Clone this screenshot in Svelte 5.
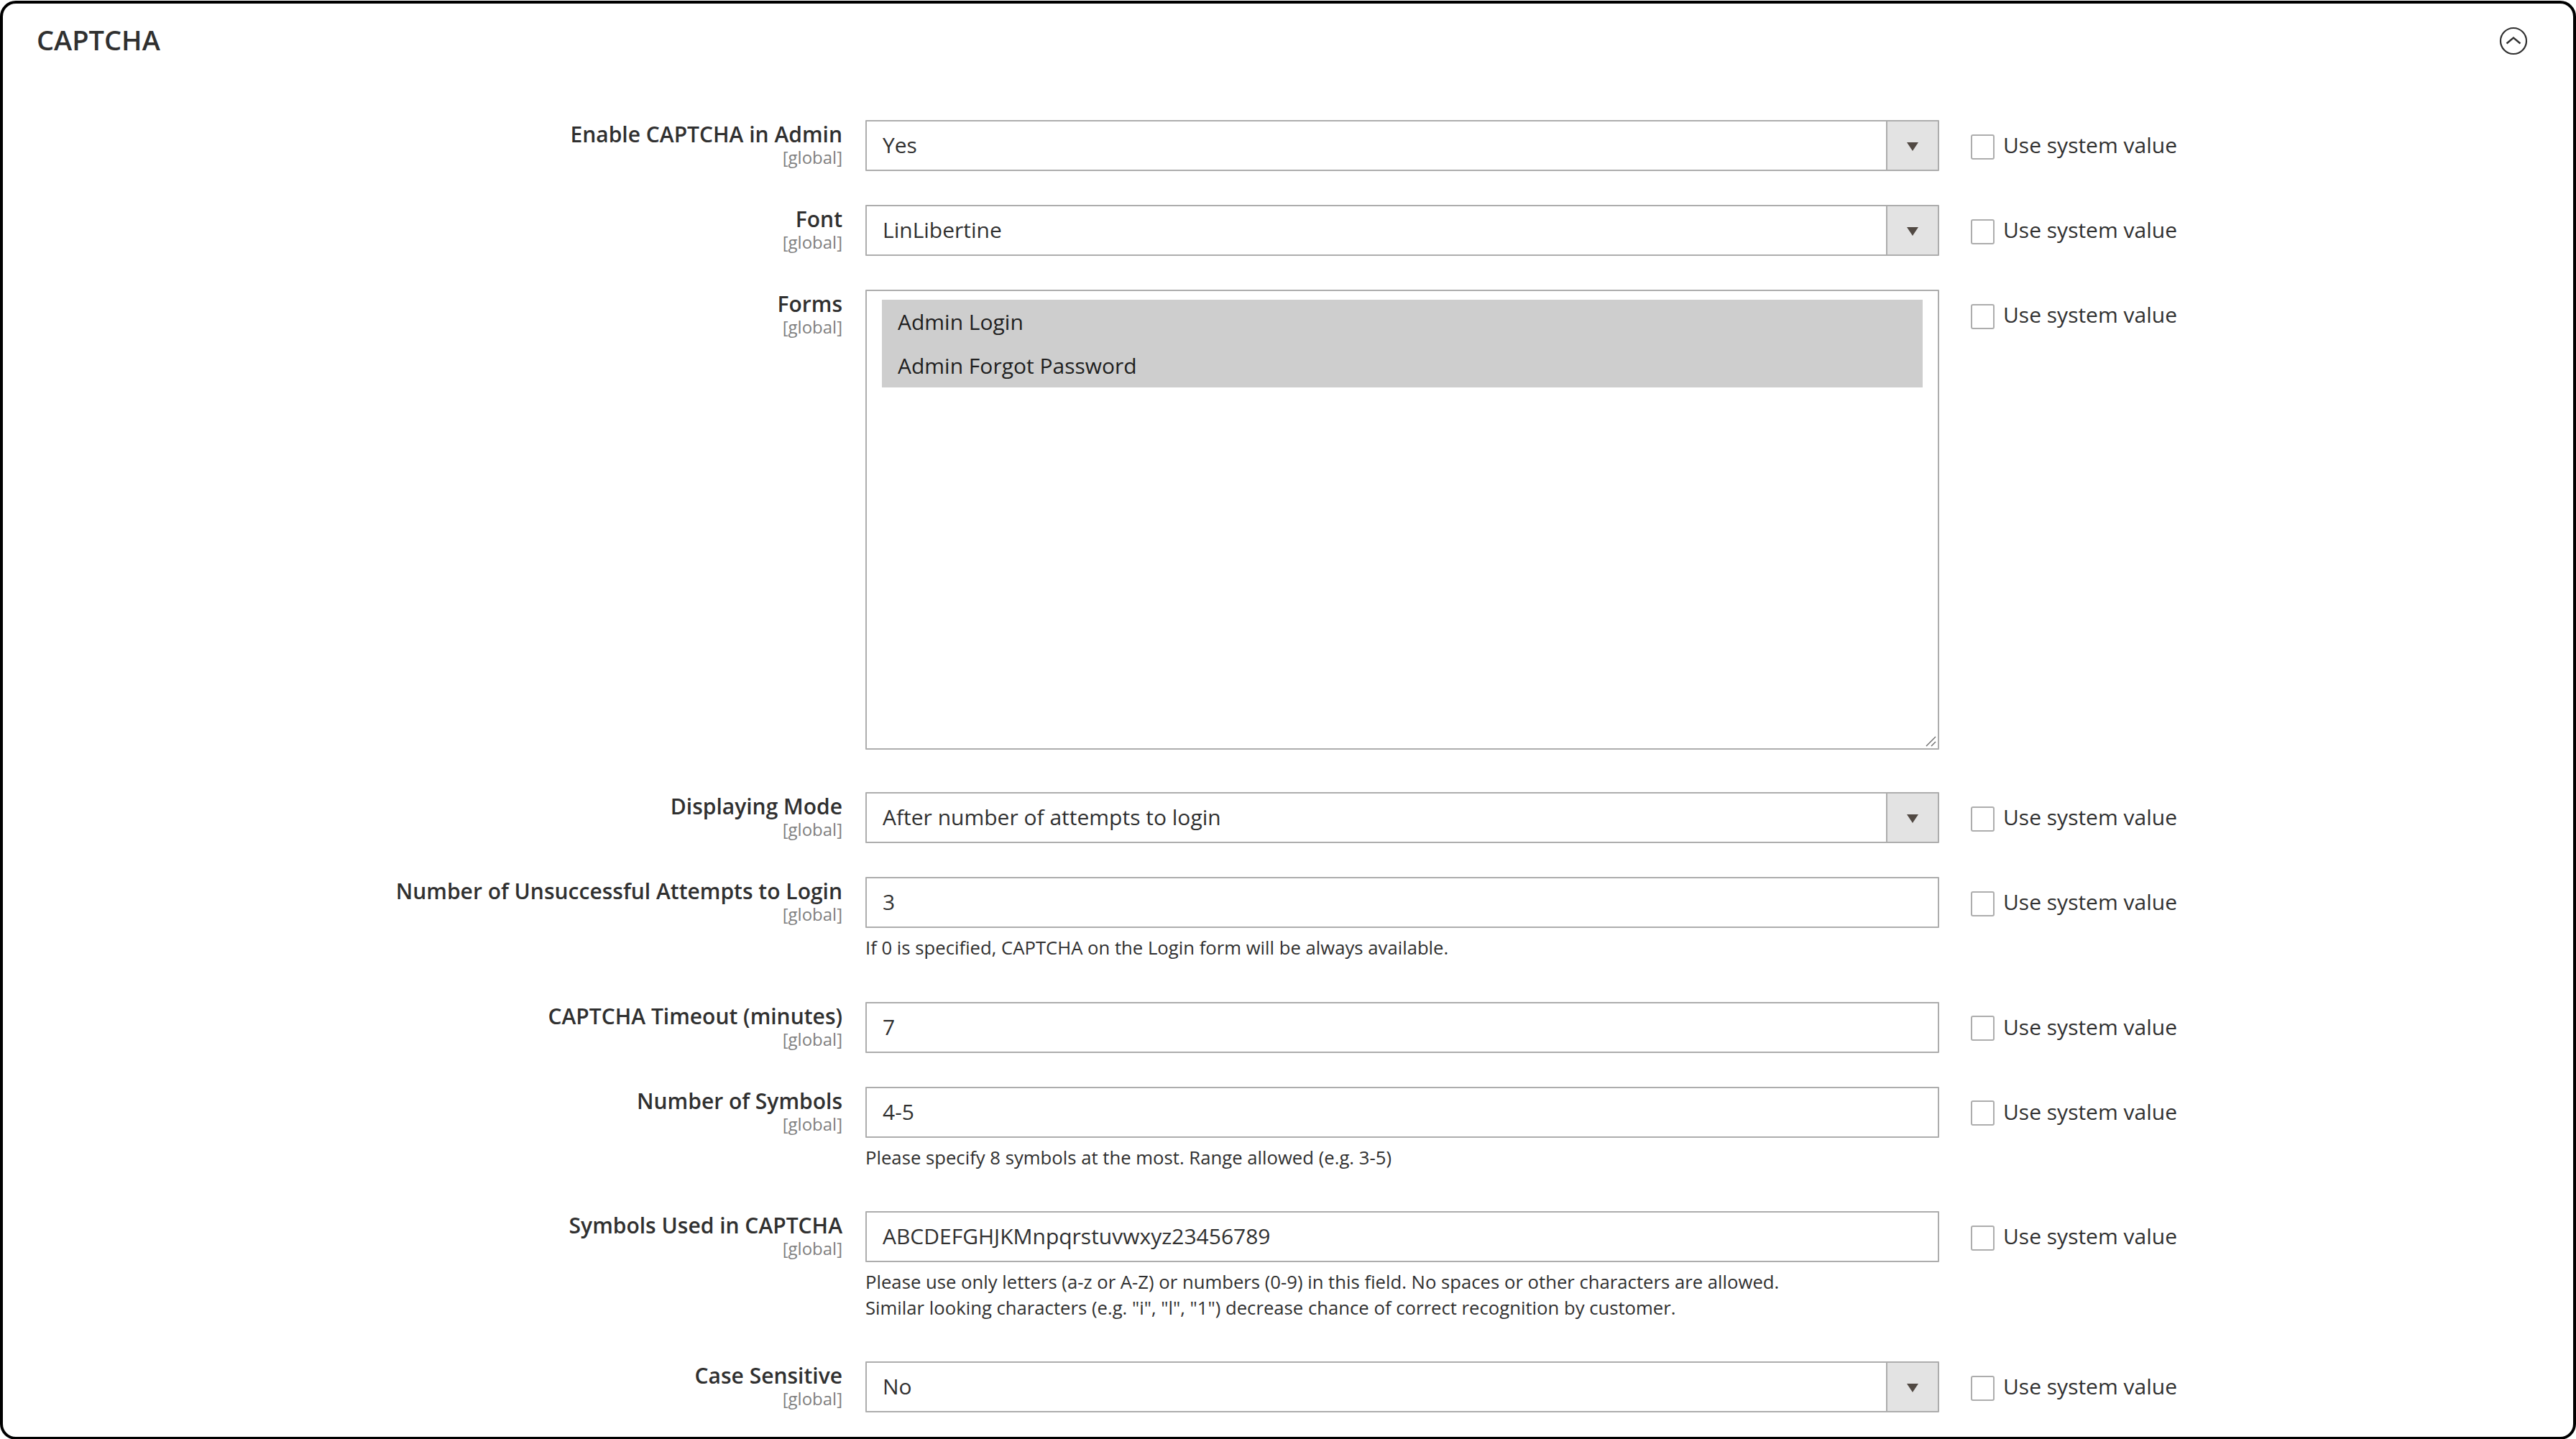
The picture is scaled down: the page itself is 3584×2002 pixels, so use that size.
<script>
	const rows = [
		{ label: "Enable CAPTCHA in Admin", type: "select", value: "Yes" },
		{ label: "Font", type: "select", value: "LinLibertine" },
		{ label: "Forms", type: "multi", options: ["Admin Login", "Admin Forgot Password"] },
		{ label: "Displaying Mode", type: "select", value: "After number of attempts to login" },
		{
			label: "Number of Unsuccessful Attempts to Login",
			type: "input",
			value: "3",
			notes: ["If 0 is specified, CAPTCHA on the Login form will be always available."]
		},
		{ label: "CAPTCHA Timeout (minutes)", type: "input", value: "7" },
		{
			label: "Number of Symbols",
			type: "input",
			value: "4-5",
			notes: ["Please specify 8 symbols at the most. Range allowed (e.g. 3-5)"]
		},
		{
			label: "Symbols Used in CAPTCHA",
			type: "input",
			value: "ABCDEFGHJKMnpqrstuvwxyz23456789",
			notes: [
				"Please use only letters (a-z or A-Z) or numbers (0-9) in this field. No spaces or other characters are allowed.",
				'Similar looking characters (e.g. "i", "l", "1") decrease chance of correct recognition by customer.'
			]
		},
		{ label: "Case Sensitive", type: "select", value: "No" }
	];
</script>

<main class="frame">
	<header class="head">
		<h2>CAPTCHA</h2>
		<svg class="toggle" viewBox="0 0 40 40" width="40" height="40" fill="none" stroke="#303030">
			<circle cx="20" cy="20" r="18" stroke-width="2.2" />
			<path d="M10.5 23.5L20 15.5l9.5 8" stroke-width="2.4" />
		</svg>
	</header>

	<div class="rows">
		{#each rows as row}
			<div class="row">
				<div class="label">
					<span class="name">{row.label}</span>
					<span class="scope">[global]</span>
				</div>
				<div class="field">
					{#if row.type === "select"}
						<div class="control select">
							<span class="value">{row.value}</span>
							<span class="addon"><i class="arrow"></i></span>
						</div>
					{:else if row.type === "multi"}
						<div class="control multi">
							{#each row.options as option}
								<div class="option">{option}</div>
							{/each}
							<svg class="grip" viewBox="0 0 16 16" width="16" height="16" stroke="#6b6b6b" stroke-width="1.4">
								<path d="M2 15L15 2M9 15l6-6" />
							</svg>
						</div>
					{:else}
						<div class="control">
							<span class="value">{row.value}</span>
						</div>
					{/if}
					{#if row.notes}
						<div class="note">
							{#each row.notes as note}
								<div>{note}</div>
							{/each}
						</div>
					{/if}
				</div>
				<label class="inherit">
					<input type="checkbox" />
					<span>Use system value</span>
				</label>
			</div>
		{/each}
	</div>
</main>

<style>
	:global(body) {
		margin: 0;
		background: #fff;
	}

	.frame {
		box-sizing: border-box;
		width: 3584px;
		height: 2002px;
		margin-top: 1px;
		border: 4px solid #000;
		border-radius: 22px;
		padding: 0 0 0 47px;
		font-family: "Open Sans", sans-serif;
		color: #303030;
		overflow: hidden;
	}

	.head {
		display: flex;
		align-items: center;
		justify-content: space-between;
		height: 102px;
		margin-bottom: 60px;
		padding-right: 63px;
	}

	h2 {
		margin: -3px 0 0;
		font-size: 38px;
		font-weight: 600;
		line-height: 100px;
	}

	.toggle {
		margin-top: 2px;
	}

	.rows {
		display: flex;
		flex-direction: column;
		gap: 47px;
	}

	.row {
		display: flex;
		align-items: flex-start;
	}

	.label {
		box-sizing: border-box;
		display: flex;
		flex-direction: column;
		align-items: flex-end;
		flex: none;
		width: 1121px;
		padding-top: 1px;
		margin-right: 32px;
	}

	.name {
		font-size: 30px;
		font-weight: 600;
		line-height: 38px;
		white-space: nowrap;
	}

	.scope {
		font-size: 24px;
		line-height: 26px;
		color: #808080;
	}

	.field {
		flex: none;
		width: 1494px;
		margin-right: 44px;
	}

	.control {
		box-sizing: border-box;
		position: relative;
		display: flex;
		align-items: center;
		height: 71px;
		padding-left: 22px;
		border: 2.3px solid #adadad;
		border-radius: 1px;
		font-size: 30px;
		color: #303030;
	}

	.value {
		margin-top: -2px;
	}

	.addon {
		position: absolute;
		top: 0;
		right: 0;
		bottom: 0;
		display: flex;
		align-items: center;
		justify-content: center;
		width: 70px;
		border-left: 2.3px solid #adadad;
		background: #e3e3e3;
	}

	.arrow {
		width: 0;
		height: 0;
		margin-top: 3px;
		border-left: 8.5px solid transparent;
		border-right: 8.5px solid transparent;
		border-top: 12px solid #514943;
	}

	.multi {
		display: block;
		height: 640px;
		margin-bottom: 12px;
		padding: 12px 21px 0 21px;
	}

	.option {
		height: 61px;
		padding-left: 22px;
		background: #cecece;
		font-size: 30px;
		line-height: 61px;
		color: #1f1f1f;
	}

	.grip {
		position: absolute;
		right: 2px;
		bottom: 2px;
	}

	.note {
		margin-top: 10px;
		margin-bottom: 10px;
		font-size: 25.7px;
		line-height: 35.5px;
		color: #303030;
	}

	.inherit {
		display: flex;
		align-items: center;
		gap: 12px;
		height: 71px;
		font-size: 30px;
		white-space: nowrap;
	}

	.inherit span {
		margin-top: -2px;
	}

	.inherit input {
		appearance: none;
		box-sizing: border-box;
		width: 33px;
		height: 35px;
		margin: 3px 0 0;
		border: 2.3px solid #adadad;
		border-radius: 3px;
		background: #fff;
	}
</style>
